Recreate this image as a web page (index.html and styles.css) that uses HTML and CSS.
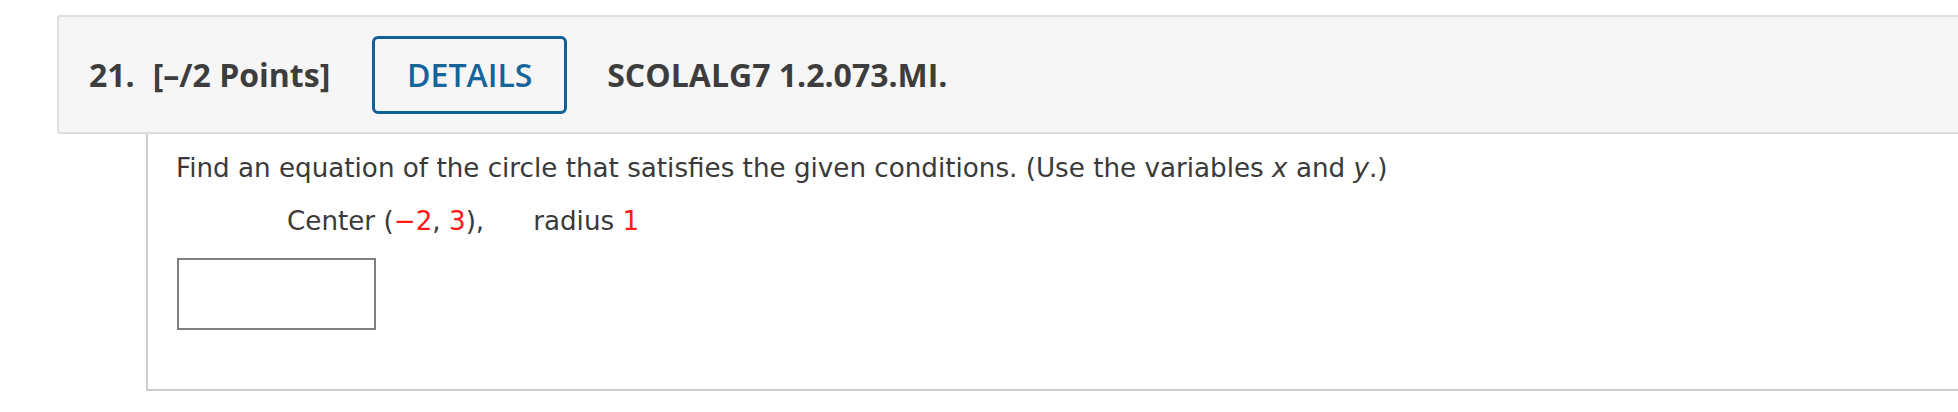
FILE: index.html
```html
<!DOCTYPE html>
<html lang="en">
<head>
<meta charset="utf-8">
<title>Question 21</title>
<link rel="stylesheet" href="styles.css">
</head>
<body>
<div class="question">
  <div class="q-header">
    <span class="q-num">21.</span>
    <span class="q-points">[–/2 Points]</span>
    <button class="details-btn" type="button">DETAILS</button>
    <span class="q-ref">SCOLALG7 1.2.073.MI.</span>
  </div>
  <div class="q-body">
    <p class="prompt">Find an equation of the circle that satisfies the given conditions. (Use the variables <i>x</i> and <i>y</i>.)</p>
    <p class="given">Center (<span class="red">−2</span>, <span class="red">3</span>),<span class="radius">radius <span class="red">1</span></span></p>
    <div class="answer"></div>
  </div>
</div>
</body>
</html>
```

FILE: styles.css
```css
html, body {
  margin: 0;
  padding: 0;
  background: #ffffff;
  overflow: hidden;
}

.question {
  padding-top: 15px;
  padding-left: 57px;
  margin-right: -20px;
}

.q-header {
  display: flex;
  align-items: center;
  height: 115px;
  padding-left: 30px;
  background: #f6f6f6;
  border: 2px solid #dedede;
  border-right: none;
  border-radius: 3px 0 0 3px;
  font-family: "Open Sans", "Liberation Sans", sans-serif;
  font-weight: 700;
  font-size: 32px;
  color: #3d3d3d;
}

.q-points {
  margin-left: 18px;
}

.details-btn {
  margin-left: 42px;
  width: 195px;
  height: 78px;
  padding: 0;
  box-sizing: border-box;
  background: #f6f6f6;
  border: 3px solid #0f6197;
  border-radius: 6px;
  font-family: inherit;
  font-weight: 600;
  font-size: 32px;
  color: #15649a;
}

.q-ref {
  margin-left: 40px;
}

.q-body {
  margin-left: 89px;
  padding: 18px 0 59px 28px;
  border-left: 2px solid #cccccc;
  border-bottom: 2px solid #cccccc;
  font-family: "DejaVu Sans", Verdana, sans-serif;
  font-size: 26.2px;
  line-height: 32px;
  color: #3a3a3a;
}

.prompt {
  margin: 0;
}

.given {
  margin: 21px 0 0 111px;
}

.radius {
  margin-left: 49px;
}

.red {
  color: #ff1a1a;
}

.answer {
  margin-top: 21px;
  margin-left: 1px;
  width: 199px;
  height: 72px;
  box-sizing: border-box;
  border: 2px solid #808080;
  background: #ffffff;
}
```
